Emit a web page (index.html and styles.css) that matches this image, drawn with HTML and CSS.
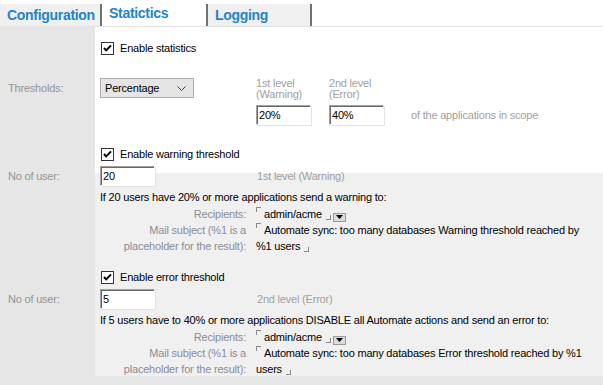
FILE: index.html
```html
<!DOCTYPE html>
<html lang="en">
<head>
  <meta charset="UTF-8">
  <title>Statistics settings</title>
  <link rel="stylesheet" href="styles.css">
</head>
<body>
<nav class="tabs">
  <span class="tab tab--first">Configuration</span>
  <span class="tab tab--active">Statictics</span>
  <span class="tab tab--last">Logging</span>
</nav>
<main class="panel">
  <div class="row row--stats">
    <span class="row__label"></span>
    <div class="row__body">
      <label class="check">
        <svg class="check__box" width="13" height="13" viewBox="0 0 13 13"><rect x="0.5" y="0.5" width="12" height="12" fill="#fff" stroke="#333"/><path d="M3 6 L5.2 8.4 L10 3.4" fill="none" stroke="#000" stroke-width="2"/></svg>
        Enable statistics
      </label>
    </div>
  </div>

  <div class="row row--levels">
    <span class="row__label row__label--top">Thresholds:</span>
    <div class="row__body levels">
      <div class="select">
        <span>Percentage</span>
        <svg width="9" height="5" viewBox="0 0 9 5"><path d="M0.5 0.5 L4.5 4.5 L8.5 0.5" fill="none" stroke="#444"/></svg>
      </div>
      <div class="level">
        <span class="hint">1st level<br>(Warning)</span>
        <span class="field">20%</span>
      </div>
      <div class="level">
        <span class="hint">2nd level<br>(Error)</span>
        <span class="field">40%</span>
      </div>
      <span class="hint hint--scope">of the applications in scope</span>
    </div>
  </div>

  <div class="row row--check">
    <span class="row__label"></span>
    <div class="row__body">
      <label class="check">
        <svg class="check__box" width="13" height="13" viewBox="0 0 13 13"><rect x="0.5" y="0.5" width="12" height="12" fill="#fff" stroke="#333"/><path d="M3 6 L5.2 8.4 L10 3.4" fill="none" stroke="#000" stroke-width="2"/></svg>
        Enable warning threshold
      </label>
    </div>
  </div>

  <div class="row row--users">
    <span class="row__label">No of user:</span>
    <div class="row__body users">
      <span class="field">20</span>
      <span class="hint">1st level (Warning)</span>
    </div>
  </div>

  <div class="row row--notice">
    <span class="row__label"></span>
    <div class="row__body">If 20 users have 20% or more applications send a warning to:</div>
  </div>

  <div class="row row--mail">
    <span class="row__label"></span>
    <div class="row__body mail">
      <span class="mail__label">Recipients:</span>
      <span class="mail__value"><i class="mark mark--start"></i>admin/acme<i class="mark mark--end"></i><span class="drop"><svg width="7" height="4" viewBox="0 0 7 4"><path d="M0 0 H7 L3.5 4 Z" fill="#000"/></svg></span></span>
      <span class="mail__label">Mail subject (%1 is a placeholder for the result):</span>
      <span class="mail__value"><i class="mark mark--start"></i>Automate sync: too many databases Warning threshold reached by %1 users<i class="mark mark--end"></i></span>
    </div>
  </div>

  <div class="row row--check row--error">
    <span class="row__label"></span>
    <div class="row__body">
      <label class="check">
        <svg class="check__box" width="13" height="13" viewBox="0 0 13 13"><rect x="0.5" y="0.5" width="12" height="12" fill="#fff" stroke="#333"/><path d="M3 6 L5.2 8.4 L10 3.4" fill="none" stroke="#000" stroke-width="2"/></svg>
        Enable error threshold
      </label>
    </div>
  </div>

  <div class="row row--users">
    <span class="row__label">No of user:</span>
    <div class="row__body users">
      <span class="field">5</span>
      <span class="hint">2nd level (Error)</span>
    </div>
  </div>

  <div class="row row--notice">
    <span class="row__label"></span>
    <div class="row__body">If 5 users have to 40% or more applications DISABLE all Automate actions and send an error to:</div>
  </div>

  <div class="row row--mail">
    <span class="row__label"></span>
    <div class="row__body mail">
      <span class="mail__label">Recipients:</span>
      <span class="mail__value"><i class="mark mark--start"></i>admin/acme<i class="mark mark--end"></i><span class="drop"><svg width="7" height="4" viewBox="0 0 7 4"><path d="M0 0 H7 L3.5 4 Z" fill="#000"/></svg></span></span>
      <span class="mail__label">Mail subject (%1 is a placeholder for the result):</span>
      <span class="mail__value"><i class="mark mark--start"></i>Automate sync: too many databases Error threshold reached by %1 users<i class="mark mark--end"></i></span>
    </div>
  </div>
</main>
</body>
</html>
```

FILE: styles.css
```css
body {
  margin: 0;
  background: #e6e6e6;
  font-family: "Liberation Sans", Arial, sans-serif;
  font-size: 11px;
  letter-spacing: -0.2px;
  color: #000;
}

.tabs {
  display: flex;
  height: 27px;
  box-sizing: border-box;
  padding-top: 4px;
  background: #fff;
  border-bottom: 1px solid #e3e3e3;
}

.tab {
  box-sizing: border-box;
  width: 100px;
  padding: 3px 0 0 7px;
  background: #f0f0f0;
  color: #1e85c6;
  font-size: 14px;
  font-weight: bold;
  line-height: 16px;
  letter-spacing: -0.3px;
}

.tab--active {
  width: 106px;
  padding-top: 1px;
  background: #fff;
  border-left: 2px solid #707070;
}

.tab--last {
  width: 106px;
  border-left: 2px solid #707070;
  border-right: 2px solid #707070;
}

.panel {
  height: 349px;
  background:
    linear-gradient(to right, #e6e6e6 95px, transparent 95px),
    linear-gradient(#fff 146px, #f0f0f0 146px);
}

.row {
  display: grid;
  grid-template-columns: 95px 1fr;
}

.row__label {
  align-self: center;
  padding-left: 8px;
  color: #949494;
  line-height: 20px;
}

.row__label--top {
  align-self: start;
}

.row__body {
  padding-left: 5px;
}

.row--stats {
  padding-top: 15px;
}

.row--levels {
  padding-top: 23px;
}

.row--check {
  padding-top: 23px;
}

.row--error {
  padding-top: 17px;
}

.row--users {
  padding-top: 5px;
}

.row--notice {
  padding-top: 4px;
  line-height: 14px;
}

.row--mail {
  padding-top: 2px;
}

.check {
  display: flex;
  align-items: center;
  gap: 6px;
  height: 13px;
  padding-left: 1px;
  line-height: 13px;
}

.check__box {
  display: block;
}

.levels {
  display: flex;
  align-items: flex-start;
}

.select {
  display: flex;
  align-items: center;
  justify-content: space-between;
  box-sizing: border-box;
  width: 94px;
  height: 20px;
  margin-right: 62px;
  padding: 0 7px 0 4px;
  background: #e5e5e5;
  border: 1px solid #acacac;
  line-height: 18px;
}

.level {
  display: flex;
  flex-direction: column;
  width: 55px;
  margin-right: 18px;
}

.hint {
  color: #a0a0a0;
  line-height: 11px;
}

.level .hint {
  height: 22px;
  margin-bottom: 5px;
}

.hint--scope {
  align-self: flex-end;
  margin-left: 9px;
  line-height: 20px;
}

.field {
  display: block;
  box-sizing: border-box;
  width: 55px;
  height: 20px;
  padding: 1px 0 0 2px;
  background: #fff;
  border: 1px solid;
  border-color: #a0a0a0 #fff #fff #a0a0a0;
  box-shadow: inset 1px 1px #696969, 1px 1px #e3e3e3;
  line-height: 17px;
}

.users {
  display: flex;
  align-items: center;
}

.users .hint {
  margin-left: 102px;
  line-height: 20px;
}

.mail {
  display: grid;
  grid-template-columns: 146px 330px;
  column-gap: 10px;
  line-height: 16px;
}

.mail__label {
  color: #8c8c98;
  text-align: right;
}

.mark {
  display: inline-block;
  width: 4px;
  height: 4px;
}

.mark--start {
  margin-right: 3px;
  vertical-align: 6px;
  border-top: 1px solid #8a8a8a;
  border-left: 1px solid #8a8a8a;
}

.mark--end {
  margin-left: 4px;
  vertical-align: -2px;
  border-right: 1px solid #8a8a8a;
  border-bottom: 1px solid #8a8a8a;
}

.drop {
  display: inline-flex;
  align-items: center;
  justify-content: center;
  box-sizing: border-box;
  width: 13px;
  height: 9px;
  margin-left: 2px;
  vertical-align: -1px;
  background: #dcdcdc;
  border: 1px solid #9a9a9a;
}

.drop svg {
  display: block;
}
```
